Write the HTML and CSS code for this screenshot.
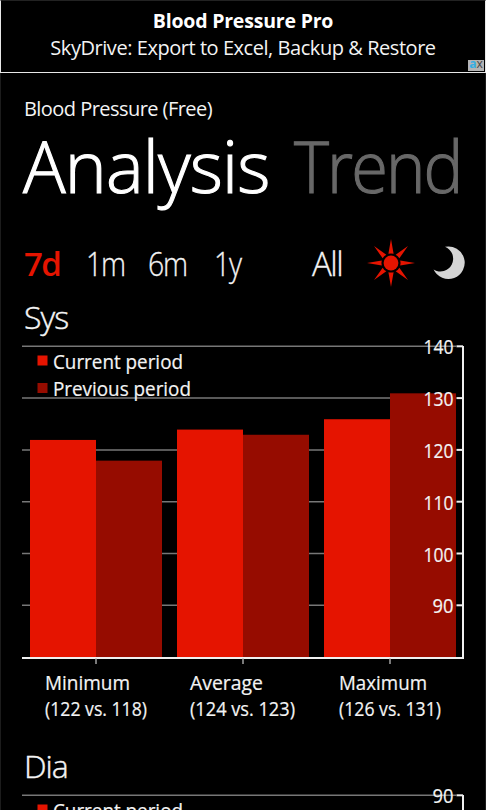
FILE: index.html
```html
<!DOCTYPE html>
<html lang="en">
<head>
    <meta charset="UTF-8">
    <meta name="viewport" content="width=device-width, initial-scale=1.0">
    <title>Blood Pressure (Free)</title>
    <link rel="stylesheet" href="styles.css">
</head>
<body>
    <div class="banner">
        <strong>Blood Pressure Pro</strong>
        <span>SkyDrive: Export to Excel, Backup &amp; Restore</span>
        <div class="ad-badge"><b>a</b>x</div>
    </div>

    <div class="page">
        <div class="app-title">Blood Pressure (Free)</div>
        <div class="pivot">
            <h1>Analysis</h1>
            <h1 class="inactive">Trend</h1>
        </div>

        <div class="filters">
            <span class="active">7d</span>
            <span class="month">1m</span>
            <span class="half">6m</span>
            <span class="year">1y</span>
            <span class="all">All</span>
            <svg class="sun" width="48" height="48" viewBox="-24 -24 48 48">
                <circle r="7.4"/>
                <g id="rays"></g>
            </svg>
            <svg class="moon" width="32" height="34" viewBox="0 0 32 34">
                <path d="M12 .8A16.3 16.3 0 1 1 .6 23.6A12.8 12.8 0 1 0 12 .8Z"/>
            </svg>
        </div>

        <h2>Sys</h2>
        <svg class="chart" id="sys" width="446" height="384" viewBox="22 335 446 384"></svg>

        <h2 class="dia-title">Dia</h2>
        <svg class="chart" id="dia" width="446" height="384" viewBox="22 335 446 384"></svg>
    </div>

<script src="script.js"></script>
</body>
</html>
```

FILE: styles.css
```css
:root {
    --current: #E51400;
    --previous: #960C00;
    --text: #F4F4F4;
}

* {
    box-sizing: border-box;
}

body {
    margin: 0;
    height: 810px;
    overflow: hidden;
    background: #000;
    color: var(--text);
    font-family: 'Open Sans', 'Noto Sans', sans-serif;
}

.banner {
    position: relative;
    height: 73px;
    padding-top: 6px;
    border: 1px solid #E8E8E8;
    border-top-color: #222;
    display: flex;
    flex-direction: column;
    align-items: center;
    font-size: 20px;
    line-height: 27px;
    white-space: nowrap;
}

.banner strong {
    font-size: 19.5px;
    letter-spacing: -0.2px;
    color: #fff;
}

.banner span {
    letter-spacing: -0.45px;
}

.ad-badge {
    position: absolute;
    right: 1px;
    bottom: 1px;
    width: 16px;
    height: 11px;
    background: #B4B4B4;
    color: #444;
    font-size: 12px;
    line-height: 8px;
    text-align: center;
}

.ad-badge b {
    color: #35AEE2;
}

.page {
    border-left: 1px solid #1C1C1C;
    border-right: 1px solid #1C1C1C;
    height: 737px;
    padding-left: 21px;
    overflow: hidden;
}

.app-title {
    padding: 22px 0 0 2px;
    font-size: 20px;
    line-height: 27px;
    letter-spacing: -0.55px;
}

.pivot {
    display: flex;
    height: 105px;
}

h1 {
    margin: 0;
    width: 272px;
    padding-left: 1px;
    font-size: 71px;
    font-weight: 300;
    line-height: 88px;
    letter-spacing: -0.8px;
    color: #fff;
    -webkit-text-stroke: 1.1px;
}

h1.inactive {
    width: auto;
    padding-left: 0;
    letter-spacing: -2px;
    color: #686868;
    transform: scaleX(0.94);
    transform-origin: left;
}

.filters {
    display: flex;
    align-items: center;
    height: 72px;
    padding-left: 2px;
    font-size: 33px;
    font-weight: 300;
    letter-spacing: -1.5px;
}

.filters span {
    width: 62px;
    transform: scaleX(0.86);
    transform-origin: left;
    -webkit-text-stroke: 0.3px;
}

.filters .active {
    font-weight: 600;
    transform: none;
    color: var(--current);
    -webkit-text-stroke: 0;
}

.filters .half {
    width: 66px;
}

.filters .year {
    width: 98px;
}

.filters .all {
    width: 55px;
    transform: none;
}

.sun {
    fill: var(--current);
}

.moon {
    margin-left: 18px;
    fill: #D4D4D4;
}

h2 {
    margin: 0;
    padding-left: 2px;
    height: 36px;
    font-size: 32px;
    line-height: 35px;
    font-weight: 300;
    letter-spacing: -1px;
    -webkit-text-stroke: 0.4px;
}

.dia-title {
    margin-top: 29px;
}

.chart {
    display: block;
    overflow: visible;
    font-size: 20px;
    fill: var(--text);
}

.chart text {
    stroke: var(--text);
    stroke-width: 0.2;
}

.grid {
    stroke: #777;
    stroke-width: 1.5;
}

.axis {
    fill: none;
    stroke: #F0F0F0;
    stroke-width: 2;
}

.tick {
    stroke: #BBB;
    stroke-width: 1.3;
}

.current {
    fill: var(--current);
}

.previous {
    fill: var(--previous);
}
```

FILE: script.js
```js
const top0 = 346.3, base = 657.5, step = 51.8;

const text = (x, y, width, str) =>
    `<text x="${x}" y="${y}" textLength="${width}" lengthAdjust="spacingAndGlyphs">${str}</text>`;

function drawChart(id, max, groups) {
    let lines = '', bars = '', labels = '';

    for (let i = 0; i < 6; i++) {
        const y = top0 + i * step;
        const value = max - i * 10;
        const width = value > 99 ? 30 : 21;
        lines += `<path class="grid" d="M22 ${y}H456"/>`;
        labels += `<path class="axis" d="M456.5 ${y}H463"/>` + text(453.5 - width, y + 8, width, value);
    }

    groups.forEach((group, i) => {
        const x = 30 + i * 147;
        const yc = base - (group.current - max + 60) * step / 10;
        const yp = base - (group.previous - max + 60) * step / 10;
        bars += `<rect class="current" x="${x}" y="${yc}" width="66" height="${base - yc}"/>`;
        bars += `<rect class="previous" x="${x + 66}" y="${yp}" width="66" height="${base - yp}"/>`;
        labels += `<path class="tick" d="M${x + 66} 658V664"/>`;
        labels += text(group.x, 690, group.width, group.name);
        labels += text(group.x, 716, group.rangeWidth, `(${group.current} vs. ${group.previous})`);
    });

    document.getElementById(id).innerHTML = lines + bars +
        `<path class="axis" d="M22 658H463V346"/>` + labels +
        `<rect class="current" x="37.5" y="355.5" width="10" height="10"/>` + text(53, 369, 130, 'Current period') +
        `<rect class="previous" x="37.5" y="383" width="10" height="10"/>` + text(53, 396, 138, 'Previous period');
}

// Rays of the day filter icon
let rays = '';
for (let i = 0; i < 8; i++) {
    rays += `<path d="M-2.6 -9.2L0 -24L2.6 -9.2Q0 -10 -2.6 -9.2Z" transform="rotate(${i * 45})"/>`;
}
document.getElementById('rays').innerHTML = rays;

drawChart('sys', 140, [
    { name: 'Minimum', current: 122, previous: 118, x: 45, width: 85, rangeWidth: 102 },
    { name: 'Average', current: 124, previous: 123, x: 190, width: 73, rangeWidth: 105 },
    { name: 'Maximum', current: 126, previous: 131, x: 339, width: 88, rangeWidth: 102 }
]);
drawChart('dia', 90, [
    { name: 'Minimum', current: 72, previous: 68, x: 45, width: 85, rangeWidth: 86 },
    { name: 'Average', current: 76, previous: 75, x: 190, width: 73, rangeWidth: 86 },
    { name: 'Maximum', current: 80, previous: 82, x: 339, width: 88, rangeWidth: 86 }
]);
```
